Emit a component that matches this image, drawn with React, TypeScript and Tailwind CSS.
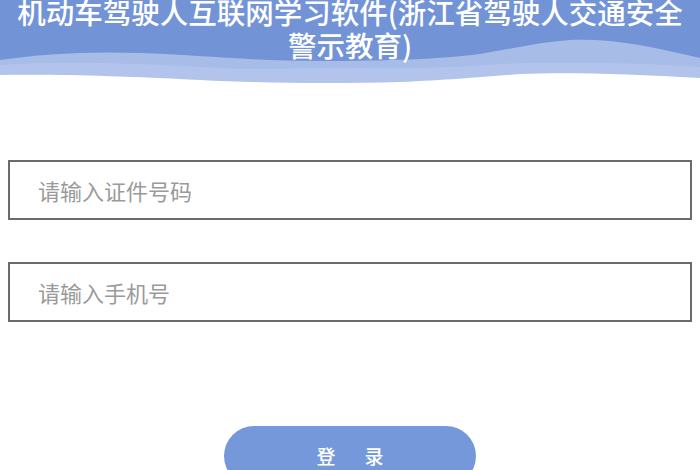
import React from 'react';

const FONT = { fontFamily: '"Noto Sans CJK SC", "Noto Sans", sans-serif' };

const Waves: React.FC = () => (
  <svg className="absolute left-0 bottom-0 w-full h-[50px]" viewBox="0 0 700 50" preserveAspectRatio="none">
    <path
      d="M0,22 C40,16 90,13 140,15 C200,17 250,23 320,23 C390,23 440,21 480,16 C510,11 540,4 570,2 C610,0 650,8 700,20 L700,50 L0,50 Z"
      fill="#a8bce8"
    />
    <path
      d="M0,27 C60,23 130,25 200,29 C260,33 300,29 360,30 C420,31 460,29 500,26 C560,23 640,25 700,29 L700,50 L0,50 Z"
      fill="#b6c7ec"
      opacity="0.7"
    />
    <path
      d="M0,37 C60,36 120,38 200,42 C260,45 330,46 400,44 C450,42 480,39 520,36 C570,34 630,36 700,40 L700,50 L0,50 Z"
      fill="#ffffff"
    />
  </svg>
);

export default function App() {
  return (
    <div className="w-[700px] h-[470px] overflow-hidden bg-white" style={FONT}>
      <header className="relative h-[88px] bg-[#7294d6] overflow-hidden">
        <h1 className="relative z-10 -mt-[5px] px-3 text-center text-[28.5px] leading-[33px] font-medium text-white">
          机动车驾驶人互联网学习软件(浙江省驾驶人交通安全警示教育)
        </h1>
        <Waves />
      </header>

      <div className="px-2 pt-[72px] flex flex-col gap-[42px]">
        <input
          className="h-[60px] w-full border-2 border-[#6b6b6b] pl-[28px] text-[22px] text-[#333] placeholder-[#9a9a9a] outline-none"
          placeholder="请输入证件号码"
        />
        <input
          className="h-[60px] w-full border-2 border-[#6b6b6b] pl-[28px] text-[22px] text-[#333] placeholder-[#9a9a9a] outline-none"
          placeholder="请输入手机号"
        />
      </div>

      <div className="flex justify-center mt-[104px]">
        <button className="w-[252px] h-[60px] rounded-full bg-[#7598da] text-white text-[19px] font-medium flex items-center justify-center gap-[29px]">
          <span>登</span>
          <span>录</span>
        </button>
      </div>
    </div>
  );
}
